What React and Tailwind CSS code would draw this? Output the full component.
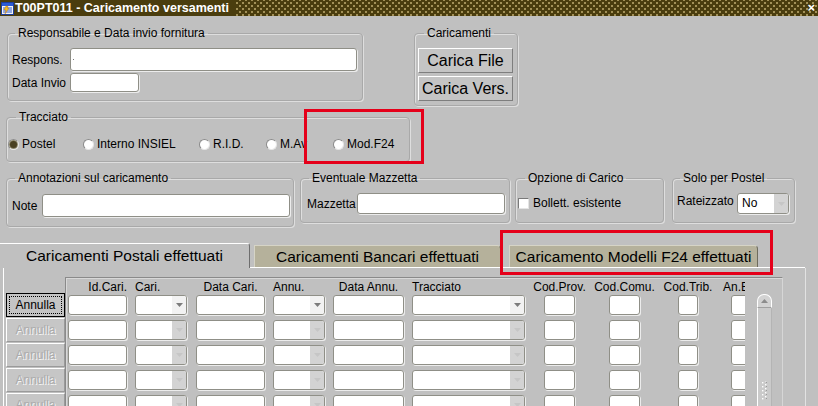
import React from "react";

// campi e gruppi stile Oracle Forms
function Group({ title, className = "", legend = "ml-[7px]", children }) {
  return (
    <fieldset
      className={`shrink-0 rounded-[4px] border border-[#a9a9a9] shadow-[inset_1px_1px_0_#dedede,1px_1px_0_#dedede] ${className}`}
    >
      <legend className={`${legend} px-[3px] text-[12px] leading-[14px] text-black`}>{title}</legend>
      {children}
    </fieldset>
  );
}

function Field({ className = "", children }) {
  return (
    <div
      className={`shrink-0 bg-white border border-[#8f8f87] rounded-[3px] shadow-[1px_1px_0_#ececec] ${className}`}
    >
      {children}
    </div>
  );
}

function Combo({ className = "", active = false, text = "" }) {
  return (
    <Field className={`flex overflow-hidden ${className}`}>
      <div className="flex-1 pl-[4px] text-[12px] leading-[19px]">{text}</div>
      <div
        className={`w-[14px] flex items-center justify-center ${
          active ? "bg-[#f2f2f2]" : "bg-[#d3d3d3]"
        }`}
      >
        <svg width="7" height="4" viewBox="0 0 7 4">
          <path d="M0 0H7L3.5 4Z" fill={active ? "#7c7c7c" : "#c6c6c6"} />
        </svg>
      </div>
    </Field>
  );
}

function Radio({ checked, label, className = "" }) {
  return (
    <div className={`flex items-center shrink-0 ${className}`}>
      <div className="w-[11px] h-[11px] rounded-full bg-white border border-[#8a8a8a] border-b-[#e6e6e6] border-r-[#e6e6e6] flex items-center justify-center">
        {checked && <div className="w-[7px] h-[7px] rounded-full bg-[#4a4122] shadow-[0_0_0_1px_#8a8468]" />}
      </div>
      <span className="ml-[3px] text-[12px] leading-[14px]">{label}</span>
    </div>
  );
}

const cols = [
  { label: "Id.Cari.", w: "ml-[2px] w-[59px]", h: "justify-end" },
  { label: "Cari.", w: "ml-[8px] w-[52px]", h: "justify-start", combo: true },
  { label: "Data Cari.", w: "ml-[9px] w-[69px]", h: "justify-center" },
  { label: "Annu.", w: "ml-[8px] w-[52px]", h: "justify-start", combo: true },
  { label: "Data Annu.", w: "ml-[8px] w-[71px]", h: "justify-center" },
  { label: "Tracciato", w: "ml-[8px] w-[113px]", h: "justify-start", combo: true },
  { label: "Cod.Prov.", w: "ml-[19px] w-[31px]", h: "justify-center" },
  { label: "Cod.Comu.", w: "ml-[34px] w-[31px]", h: "justify-center" },
  { label: "Cod.Trib.", w: "ml-[38px] w-[20px]", h: "justify-center" },
  { label: "An.Eff.", w: "ml-[33px] w-[20px]", h: "justify-center" },
];

const rows = [0, 1, 2, 3, 4];

export default function App() {
  return (
    <div className="relative w-[818px] h-[406px] overflow-hidden bg-[#c0c0c0] font-['Liberation_Sans',Arial,sans-serif] text-[12px] text-black">
      {/* barra del titolo */}
      <div className="h-[16px] flex items-center bg-[#4a3d0e] bg-[radial-gradient(circle,#a4935a_0.7px,transparent_1px),radial-gradient(circle,#a4935a_0.7px,transparent_1px)] bg-[length:6px_6px] bg-[position:0_0,3px_3px]">
        <div className="h-full flex items-center bg-[#4a3d0e] pr-[6px]">
          <svg width="13" height="13" viewBox="0 0 13 13" className="ml-[1px]">
            <rect x="0.5" y="0.5" width="12" height="12" fill="#f4f4f4" stroke="#1c3e9a" />
            <rect x="1" y="1" width="11" height="3" fill="#2a5bd6" />
            <path d="M2 6h9M2 8h9M2 10h9" stroke="#2a5bd6" strokeWidth="1" />
            <path d="M5 4L3 8h2l-1 4 4-6H6l1-2z" fill="#f2c21a" stroke="#b5651d" strokeWidth="0.4" />
          </svg>
          <span className="ml-[1px] text-white font-bold text-[12.5px] leading-[16px]">
            T00PT011 - Caricamento versamenti
          </span>
        </div>
        <div className="flex-1" />
        <span className="mr-[3px] text-white font-bold text-[13px] leading-[16px]">×</span>
      </div>

      {/* riga 1 */}
      <div className="flex items-start pt-[10px]">
        <Group title="Responsabile e Data invio fornitura" className="ml-[7px] w-[356px] h-[75px]">
          <div className="flex items-center mt-[8px] pl-[4px]">
            <span className="w-[58px] shrink-0">Respons.</span>
            <Field className="w-[287px] h-[23px] flex items-center">
              <div className="ml-[2px] w-[1px] h-[1px] bg-[#777]" />
            </Field>
          </div>
          <div className="flex items-center mt-[2px] pl-[4px]">
            <span className="w-[58px] shrink-0">Data Invio</span>
            <Field className="w-[69px] h-[19px]" />
          </div>
        </Group>

        <Group title="Caricamenti" legend="ml-[9px]" className="ml-[51px] w-[104px] h-[80px]">
          <div className="flex flex-col gap-[3px] mt-[8px] pl-[3px]">
            {["Carica File", "Carica Vers."].map((t) => (
              <button
                key={t}
                className="w-[95px] h-[25px] bg-[#c4c4c4] border border-white border-b-[#7e7e7e] border-r-[#7e7e7e] text-[16px] leading-[22px] text-black"
              >
                {t}
              </button>
            ))}
          </div>
        </Group>
      </div>

      {/* tracciato */}
      <Group title="Tracciato" legend="ml-[9px]" className="ml-[6px] mt-[4px] w-[404px] h-[52px]">
        <div className="flex items-center mt-[13px] pl-[1px]">
          <Radio checked label="Postel" className="w-[75px]" />
          <Radio label="Interno INSIEL" className="w-[116px]" />
          <Radio label="R.I.D." className="w-[67px]" />
          <Radio label="M.Av" className="w-[67px]" />
          <Radio label="Mod.F24" />
        </div>
      </Group>

      {/* riga 3 */}
      <div className="flex items-start mt-[9px]">
        <Group title="Annotazioni sul caricamento" legend="ml-[8px]" className="ml-[6px] w-[288px] h-[56px]">
          <div className="flex items-center mt-[9px] pl-[5px]">
            <span className="w-[30px] shrink-0">Note</span>
            <Field className="w-[248px] h-[23px]" />
          </div>
        </Group>
        <Group title="Eventuale Mazzetta" legend="ml-[8px]" className="ml-[6px] w-[210px] h-[52px]">
          <div className="flex items-center mt-[8px] pl-[6px]">
            <span className="w-[50px] shrink-0">Mazzetta</span>
            <Field className="w-[148px] h-[21px]" />
          </div>
        </Group>
        <Group title="Opzione di Carico" legend="ml-[9px]" className="ml-[5px] w-[149px] h-[52px]">
          <div className="flex items-center mt-[11px] pl-[2px]">
            <div className="w-[11px] h-[11px] bg-white border border-[#7a7a7a] border-b-[#e4e4e4] border-r-[#e4e4e4]" />
            <span className="ml-[4px] leading-[14px]">Bollett. esistente</span>
          </div>
        </Group>
        <Group title="Solo per Postel" legend="ml-[7px]" className="ml-[8px] w-[123px] h-[52px]">
          <div className="flex items-start mt-[8px] pl-[4px]">
            <span className="w-[60px] shrink-0 pt-[1px] leading-[14px]">Rateizzato</span>
            <Combo className="w-[52px] h-[21px]" text="No" />
          </div>
        </Group>
      </div>

      {/* schede */}
      <div className="flex mt-[16px] h-[25px]">
        <div className="w-[250px] h-[25px] shrink-0 bg-[#c0c0c0] border-t border-white border-r border-r-[#6e6e6e] rounded-tr-[3px] flex items-center justify-center text-[15.5px] leading-[20px] pb-[1px]">
          Caricamenti Postali effettuati
        </div>
        <div className="w-[555px] h-[25px] shrink-0 flex items-end border-b border-white">
          <div className="ml-[4px] w-[247px] h-[22px] bg-[#b5b19b] border-t border-l border-[#d6d4c6] border-r border-r-[#6e6c5e] rounded-tr-[4px] flex items-center justify-center text-[15.5px] leading-[20px]">
            Caricamenti Bancari effettuati
          </div>
          <div className="ml-[8px] w-[249px] h-[22px] bg-[#b5b19b] border-t border-l border-[#d6d4c6] border-r border-r-[#6e6c5e] rounded-tr-[4px] flex items-center justify-center text-[15.5px] leading-[20px]">
            Caricamento Modelli F24 effettuati
          </div>
        </div>
      </div>

      {/* pannello */}
      <div className="ml-[3px] w-[803px] h-[200px] border-l border-white border-r border-r-[#e2e2e2] flex items-start pt-[9px]">
        <div className="w-[61px] shrink-0 pt-[16px] flex flex-col">
          {rows.map((r) =>
            r === 0 ? (
              <button
                key={r}
                className="ml-[2px] mb-[1px] w-[59px] h-[24px] bg-[#c4c4c4] border border-black p-[2px] text-[12px] text-black"
              >
                <div className="h-full border border-dotted border-black flex items-center justify-center">
                  Annulla
                </div>
              </button>
            ) : (
              <button
                key={r}
                className="ml-[2px] mb-[1px] w-[59px] h-[24px] bg-[#c6c6c6] border border-white border-b-[#9a9a9a] border-r-[#9a9a9a] text-[12px] text-[#ababab] [text-shadow:1px_1px_0_#f6f6f6]"
              >
                Annulla
              </button>
            )
          )}
        </div>

        <div className="w-[718px] h-[140px] shrink-0 border-t border-l border-[#8a8a8a] border-r border-r-[#d6d6d6] shadow-[inset_1px_1px_0_#d8d8d8] flex">
          <div className="w-[679px] shrink-0 overflow-hidden">
            <div className="w-max h-[17px] flex items-center">
              {cols.map((c) => (
                <div key={c.label} className={`${c.w} shrink-0 flex ${c.h} whitespace-nowrap leading-[14px]`}>
                  <span>{c.label}</span>
                </div>
              ))}
            </div>
            {rows.map((r) => (
              <div key={r} className="w-max h-[25px] flex items-start">
                {cols.map((c) =>
                  c.combo ? (
                    <Combo key={c.label} className={`${c.w} h-[20px]`} active={r === 0} />
                  ) : (
                    <Field key={c.label} className={`${c.w} h-[20px]`} />
                  )
                )}
              </div>
            ))}
          </div>

          {/* barra di scorrimento */}
          <div className="ml-[12px] mt-[16px] w-[15px] h-[130px] shrink-0 flex flex-col">
            <div className="h-[14px] bg-[#d2d2d2] border border-white border-b-[#a0a0a0] rounded-t-[7px] flex items-center justify-center">
              <svg width="7" height="4" viewBox="0 0 7 4">
                <path d="M0 4H7L3.5 0Z" fill="#8c8c8c" />
              </svg>
            </div>
            <div className="flex-1 bg-[#cacaca] border-l border-white border-r border-r-[#b4b4b4] flex flex-col items-center pt-[73px]">
              <svg width="8" height="20" viewBox="0 0 8 20">
                {[1, 5, 9, 13, 17].map((y) => (
                  <g key={y}>
                    <rect x="4" y={y - 2} width="1.4" height="1.4" fill="#ffffff" />
                    <rect x="1" y={y} width="1.4" height="1.4" fill="#ffffff" />
                    <rect x="5" y={y} width="1" height="1" fill="#9a9a9a" />
                  </g>
                ))}
              </svg>
            </div>
          </div>
        </div>
      </div>

      {/* riquadri rossi di evidenziazione */}
      <div className="absolute left-[304px] top-[109px] w-[120px] h-[55px] border-[3px] border-[#e5001a]" />
      <div className="absolute left-[500px] top-[230px] w-[273px] h-[45px] border-[3px] border-[#e5001a]" />
    </div>
  );
}
